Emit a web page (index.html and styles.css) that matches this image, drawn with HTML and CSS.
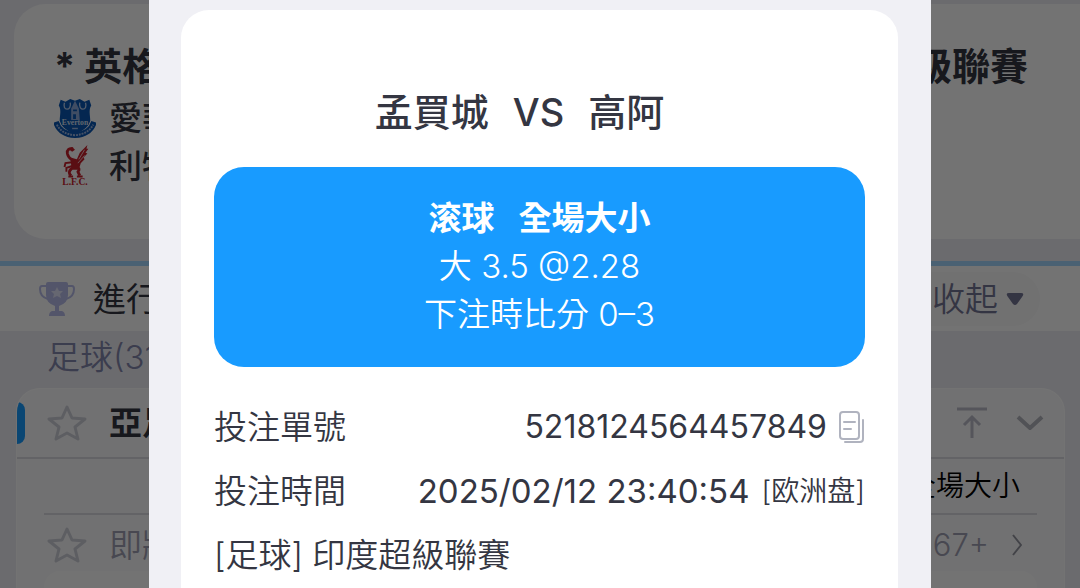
FILE: index.html
```html
<!DOCTYPE html>
<html lang="zh-Hant">
<head>
<meta charset="utf-8">
<meta name="viewport" content="width=device-width, initial-scale=1">
<title>注單詳情</title>
<link rel="stylesheet" href="styles.css">
</head>
<body>
<main class="page">
  <section class="featured">
    <h2 class="featured-title"><span>* 英格蘭</span><span>超級聯賽</span></h2>
    <div class="team">
      <svg class="crest" viewBox="0 0 44 44" aria-hidden="true">
        <path fill="#0a57b4" d="M7 3 12 5 17 2 22 4 27 2 32 5 37 3 39 9C36 14 38 19 38 25Q36 34 22 39 8 34 6 25C6 19 8 14 5 9Z"/>
        <path fill="none" stroke="#b9cdec" stroke-width="1.4" d="M11 6c-3 9 8 9 6 0M27 6c-2 9 9 9 6 0"/>
        <path fill="#8fabdc" d="M18 12 22 4 26 12 27 24H18Z"/>
        <path fill="#0a57b4" d="M20 13h4v2h-4zM20 18h3v5h-3z"/>
        <path fill="none" stroke="#0a57b4" stroke-width="6" d="M2 26Q6 39 22 40 38 39 42 26"/>
        <path fill="none" stroke="#9cb5df" stroke-width="2" stroke-dasharray="2 1" d="M3 29Q8 39 22 40 36 39 41 29"/>
        <text x="22" y="29" text-anchor="middle" class="crest-name">Everton</text>
        <path stroke="#9cb5df" stroke-width="1.5" d="M19 33h6"/>
      </svg>
      <span>愛華頓</span>
    </div>
    <div class="team">
      <svg class="crest" viewBox="0 0 44 44" aria-hidden="true">
        <path fill="none" stroke="#c8202c" stroke-width="3" stroke-linejoin="round" d="M20 4Q13 3 14 9 15 14 20 16 23 22 18 25 14 29 18 32M24 23Q28 25 25 28L27 32"/>
        <path fill="#c8202c" d="M15 4 19 2 22 5 19 7ZM17 13 24 15 27 8 35 0 34 4 36 4 33 8 35 9 31 13 32 15 28 19 26 26 19 26 18 21Z"/>
        <path fill="none" stroke="#c8202c" stroke-width="2" d="M19 18 12 19 11 23M19 22 13 24 13 28M15 33H20M24 33H30"/>
        <path stroke="#f0c5c8" stroke-width="1" fill="none" d="M26 15 32 5M25 19 32 11"/>
        <text x="22" y="42" text-anchor="middle" class="crest-initials">L.F.C.</text>
      </svg>
      <span>利物浦</span>
    </div>
  </section>

  <section class="live-bar">
    <svg class="trophy" viewBox="0 0 36 36" aria-hidden="true">
      <path fill="none" stroke="#b9bdea" stroke-width="2" d="M8 5H3Q1 5 1 8 1 16 9 18M28 5H33Q35 5 35 8 35 16 27 18"/>
      <path fill="#b9bdea" d="M7 3Q7 1 9 1H27Q29 1 29 3V14Q29 22 20 25V30H23Q26 31 26 35H10Q10 31 13 30H16V25Q7 22 7 14Z"/>
      <path fill="#e2e4fa" d="M18 6 20 10 24 10 21 13 22 17 18 15 14 17 15 13 12 10 16 10Z"/>
    </svg>
    <h2 class="live-title">進行中</h2>
    <button class="collapse" type="button">收起
      <svg class="caret" viewBox="0 0 18 14" aria-hidden="true"><path fill="#747596" d="M3 1H15Q19 1 16 5L11 12Q9 14 7 12L2 5Q-1 1 3 1Z"/></svg>
    </button>
  </section>

  <p class="sport">足球(31)</p>

  <section class="league">
    <header class="league-head">
      <svg class="star" viewBox="0 0 40 36" aria-hidden="true"><path d="M20 2 25 13 38 14 28 22 31 34 20 28 9 34 12 22 2 14 15 13Z"/></svg>
      <h3 class="league-name">亞足聯</h3>
      <svg class="to-top" viewBox="0 0 32 32" aria-hidden="true"><path d="M1 2H31M16 31V10M8 18 16 10 24 18"/></svg>
      <svg class="chevron-down" viewBox="0 0 28 16" aria-hidden="true"><path d="M2 2 14 13 26 2"/></svg>
    </header>
    <div class="market">全場大小</div>
    <div class="match">
      <svg class="star" viewBox="0 0 40 36" aria-hidden="true"><path d="M20 2 25 13 38 14 28 22 31 34 20 28 9 34 12 22 2 14 15 13Z"/></svg>
      <span>即將</span>
      <span class="more">67+</span>
      <svg class="chevron-right" viewBox="0 0 12 22" aria-hidden="true"><path d="M2 1 10 11 2 21"/></svg>
    </div>
    <div class="odds"></div>
  </section>
</main>

<div class="overlay">
  <div class="dialog" role="dialog" aria-modal="true" aria-labelledby="match-title">
    <article class="ticket">
      <h1 class="ticket-title" id="match-title"><span>孟買城</span><span>VS</span><span>高阿</span></h1>
      <div class="pick">
        <strong class="pick-type"><span>滚球</span><span>全場大小</span></strong>
        <span>大 3.5 @2.28</span>
        <span>下注時比分 0–3</span>
      </div>
      <dl class="details">
        <div class="detail">
          <dt>投注單號</dt>
          <dd><span class="ticket-id">5218124564457849</span>
            <button class="copy" type="button" aria-label="複製">
              <svg viewBox="0 0 26 33" aria-hidden="true"><path d="M4 1H17Q20 1 20 4V25Q20 28 17 28H4Q1 28 1 25V4Q1 1 4 1ZM5 11H16M5 18H12M24 9V28Q24 31 21 31H6"/></svg>
            </button>
          </dd>
        </div>
        <div class="detail">
          <dt>投注時間</dt>
          <dd><span>2025/02/12 23:40:54</span><span class="odds-type">[欧洲盘]</span></dd>
        </div>
      </dl>
      <p class="competition">[足球] 印度超級聯賽</p>
    </article>
  </div>
</div>
</body>
</html>
```

FILE: styles.css
```css
* { box-sizing: border-box; }

body {
  margin: 0;
  background: #eeeef4;
  color: #343642;
  font-family: Inter, "Noto Sans CJK TC", sans-serif;
  font-size: 33px;
  font-weight: 350;
  line-height: 48px;
}

h1, h2, h3, p, dl, dd { margin: 0; }
h1, h2, h3 { font-weight: 500; }
svg { display: block; flex: none; }
button { border: 0; padding: 0; background: none; font: inherit; color: inherit; }

.page {
  display: flex;
  flex-direction: column;
  height: 100vh;
  padding-top: 4px;
  overflow: hidden;
}

/* Featured match */
.featured {
  height: 235px;
  margin-left: 14px;
  padding: 38px 52px 0 40px;
  border-radius: 32px 0 0 32px;
  background: #fff;
}
.featured-title {
  display: flex;
  justify-content: space-between;
  height: 52px;
  font-size: 38px;
  font-weight: 700;
}
.team { display: flex; align-items: center; gap: 13px; font-weight: 500; height: 48px; }
.crest { width: 42px; height: 42px; }
.crest-name { font: bold 8px "Liberation Serif", serif; fill: #d5e0f2; }
.crest-initials { font: bold 10px "Liberation Serif", serif; fill: #c8202c; }

/* Live section */
.live-bar {
  display: flex;
  align-items: center;
  height: 70px;
  margin-top: 22px;
  padding: 0 40px 0 39px;
  border-top: 5px solid #a4d8ff;
  background: #fff;
}
.trophy { width: 36px; height: 36px; }
.live-title { margin-left: 18px; font-size: 33px; font-weight: 400; }
.collapse {
  display: flex;
  align-items: center;
  gap: 8px;
  height: 54px;
  margin-left: auto;
  padding: 0 16px 0 32px;
  border-radius: 27px;
  background: #fafafb;
  color: #747596;
}
.caret { width: 18px; height: 14px; }
.sport { padding: 2px 47px 7px; color: #8487ad; }

/* League card */
.league {
  flex: 1;
  min-height: 0;
  margin: 0 15px 0 16px;
  border: 1px solid #fff;
  border-bottom: 0;
  border-radius: 24px 24px 0 0;
  background: #fbfbfc;
  overflow: hidden;
}
.league-head {
  display: flex;
  align-items: center;
  height: 70px;
  padding-right: 20px;
  border-bottom: 2px solid #dcdce2;
}
.league-head::before {
  content: "";
  width: 8px;
  height: 42px;
  border-radius: 0 9px 9px 0;
  background: #189bff;
}
.league-head .star { margin-left: 22px; }
.star { width: 40px; height: 36px; }
.star path, .to-top path, .chevron-down path, .chevron-right path {
  fill: none;
  stroke: #cfd0da;
  stroke-width: 3;
  stroke-linejoin: round;
}
.league-name { margin-left: 22px; font-size: 33px; font-weight: 700; }
.to-top { width: 32px; height: 32px; margin-left: auto; }
.to-top path { stroke: #bcbdca; stroke-linejoin: miter; }
.chevron-down { width: 28px; height: 16px; margin-left: 28px; }
.chevron-down path { stroke: #b4b5be; stroke-width: 4; }
.market {
  height: 56px;
  margin: 0 27px;
  padding-right: 17px;
  border-bottom: 2px solid #dcdce2;
  color: #000;
  font-size: 28px;
  line-height: 54px;
  text-align: right;
}
.match {
  display: flex;
  align-items: center;
  height: 60px;
  padding: 0 41px 0 30px;
  gap: 22px;
  color: #a0a1b4;
}
.more { margin-left: auto; font-size: 31px; }
.chevron-right { width: 12px; height: 22px; }
.chevron-right path { stroke: #93949f; stroke-width: 2; }
.odds { height: 80px; margin: -4px 27px 0; border-radius: 16px; background: #fff; }

/* Bet slip dialog */
.overlay {
  position: fixed;
  inset: 0;
  display: flex;
  justify-content: center;
  background: rgba(0, 0, 0, 0.55);
}
.dialog {
  width: 72.4%;
  min-height: 100%;
  padding: 10px 33px 0 32px;
  background: #f0f0f5;
}
.ticket {
  min-height: 100%;
  padding: 72px 33px 0;
  border-radius: 28px 28px 0 0;
  background: #fff;
}
.ticket-title {
  display: flex;
  justify-content: center;
  gap: 24px;
  padding-right: 40px;
  font-size: 38px;
  line-height: 60px;
}
.pick {
  display: flex;
  flex-direction: column;
  align-items: center;
  margin-top: 25px;
  padding: 27px 0 29px;
  border-radius: 30px;
  background: #189bff;
  color: #fff;
}
.pick-type { display: flex; gap: 24px; font-weight: 700; }
.details { padding-top: 28px; }
.detail {
  display: flex;
  align-items: center;
  justify-content: space-between;
  height: 64px;
}
.detail dd { display: flex; align-items: center; gap: 12px; font-weight: 400; }
.ticket-id { font-size: 32px; }
.odds-type { font-size: 28px; font-weight: 350; }
.copy { width: 26px; height: 36px; }
.copy path { fill: none; stroke: #b0b3bf; stroke-width: 2; stroke-linecap: round; }
.competition { line-height: 64px; }
```
